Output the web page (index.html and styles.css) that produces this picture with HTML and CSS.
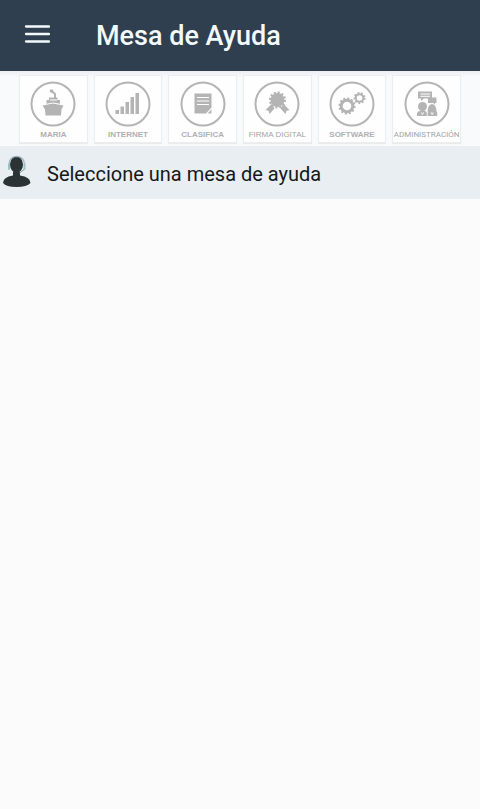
FILE: index.html
```html
<!DOCTYPE html>
<html lang="es">
<head>
<meta charset="utf-8">
<meta name="viewport" content="width=device-width, initial-scale=1">
<title>Mesa de Ayuda</title>
<link rel="stylesheet" href="styles.css">
</head>
<body>
<header class="topbar">
  <button class="menu" type="button" aria-label="Menú">
    <svg width="26" height="20" viewBox="0 0 26 20"><path d="M2 2.500H25M2 10H25M2 17.500H25" stroke="#f3fafb" stroke-width="2.300" stroke-linecap="round"/></svg>
  </button>
  <h1 class="title">Mesa de Ayuda</h1>
</header>
<main>
  <nav class="desks">
    <button class="desk" type="button">
      <svg class="icon" viewBox="0 0 46 46"><circle class="ring" cx="23" cy="23" r="21.5"/><path d="M12.500 24.500L23 22.500L33.500 24.500L31.500 28.500L31 34.500H15.500L15 28.500Z"/><path d="M16.500 22.800V19H19V16.500H27.500V19H30V22.800L23 21.500Z"/><path class="line" d="M25 17V13L21.500 10" stroke-width="2"/><circle cx="21.500" cy="10" r="1.800"/><path class="cut" d="M20 19H27" stroke-width=".8"/></svg>
      <span class="label">MARIA</span>
    </button>
    <button class="desk" type="button">
      <svg class="icon" viewBox="0 0 46 46"><circle class="ring" cx="23" cy="23" r="21.5"/><path d="M10.500 29h3.500v4h-3.500zM15.500 25.500h3.500v7.500h-3.500zM20.500 21h3.500v12h-3.500zM25.500 16h3.500v17h-3.500zM30.500 12h3.500v21h-3.500z"/></svg>
      <span class="label">INTERNET</span>
    </button>
    <button class="desk" type="button">
      <svg class="icon" viewBox="0 0 46 46"><circle class="ring" cx="23" cy="23" r="21.5"/><path d="M14.500 12.500H31.500V26.500L26 32.500H14.500Z"/><path class="cut" d="M17 16.500H29M17 20H29M17 23.500H29"/><path d="M27.500 32.500L31.500 28.300V32.500Z"/></svg>
      <span class="label">CLASIFICA</span>
    </button>
    <button class="desk" type="button">
      <svg class="icon" viewBox="0 0 46 46"><circle class="ring" cx="23" cy="23" r="21.5"/><path d="M17.500 23L11.500 29L14.500 29.700L15.500 33L20.500 27.500ZM29.500 23L35.500 29L32.500 29.700L31.500 33L26.500 27.500Z"/><circle cx="23.500" cy="19" r="7"/><circle class="teeth" cx="23.500" cy="19" r="7.300"/></svg>
      <span class="label label-light">FIRMA DIGITAL</span>
    </button>
    <button class="desk" type="button">
      <svg class="icon" viewBox="0 0 46 46"><circle class="ring" cx="23" cy="23" r="21.5"/><circle class="gear" cx="18" cy="25" r="5.800" stroke-width="3"/><circle class="teeth" cx="18" cy="25" r="7.300"/><circle class="gear" cx="30.500" cy="17" r="3.800" stroke-width="2"/><circle class="teeth teeth-small" cx="30.500" cy="17" r="5"/></svg>
      <span class="label">SOFTWARE</span>
    </button>
    <button class="desk" type="button">
      <svg class="icon" viewBox="0 0 46 46"><circle class="ring" cx="23" cy="23" r="21.5"/><path d="M14 10.500H28V17.500H20L17 20V17.500H14Z"/><path d="M24 16.500H32.500V22H31V23.500L29 22H24Z"/><path class="cut" d="M16.500 13H26M16.500 15.300H26" stroke-width=".7"/><circle cx="18.500" cy="25.500" r="4.500"/><path d="M13 35V32Q14 30 18.500 29Q22.500 30 22.800 32V35Z"/><path d="M23.700 31Q23.700 23.500 28 23Q32.500 23.500 32.500 31Z"/><path d="M23.600 35V32Q24 30 28 29Q33 30 33.300 32V35Z"/><path class="cut" d="M17.500 31.500L18.500 33.500L19.500 31.500M27.200 31.500L28.200 33.500L29.200 31.500" stroke-width=".7"/></svg>
      <span class="label label-light label-long">ADMINISTRACIÓN</span>
    </button>
  </nav>
  <section class="prompt">
    <svg class="agent" width="34" height="34" viewBox="0 0 34 34"><path d="M3 28Q3 22 13 20.500V16.500H20V20.500Q30.500 22 30.500 28Q27 32 16.500 32Q6 32 3 28Z" fill="#2c3335"/><ellipse cx="16.500" cy="9.500" rx="6.500" ry="8" fill="#2c3335"/><path d="M9 10Q9 1.500 16.500 1.300Q24.500 1.500 24.500 10" fill="none" stroke="#9bb5bb" stroke-width="1.200"/><path d="M9 9V14M24.500 9V14" stroke="#9fc0c7" stroke-width="2" stroke-linecap="round"/><path d="M24 14.500L19.500 18" stroke="#7d979d" stroke-width="1"/></svg>
    <p class="message">Seleccione una mesa de ayuda</p>
  </section>
</main>
</body>
</html>
```
FILE: styles.css
```css
* {
  box-sizing: border-box;
}

body {
  margin: 0;
  min-height: 100vh;
  background: #fbfbfb;
  font-family: Roboto, "Liberation Sans", sans-serif;
}

button {
  margin: 0;
  padding: 0;
  border: 0;
  background: none;
}

svg {
  display: block;
}

.topbar {
  display: flex;
  align-items: center;
  gap: 46px;
  height: 71px;
  padding: 0 24px;
  background: #2f3f50;
}

.menu {
  padding-bottom: 4px;
}

.title {
  margin: 0;
  color: #f3fafb;
  font-size: 27px;
  font-weight: 500;
  line-height: 32px;
}

.desks {
  display: grid;
  grid-template-columns: repeat(6, minmax(0, 1fr));
  gap: 6px;
  padding: 4px 19px 3px;
  background: linear-gradient(#eceef2, #f9fafb 6px);
}

.desk {
  display: flex;
  flex-direction: column;
  align-items: center;
  gap: 3px;
  padding: 5px 0 2px;
  border: 1px solid #ededef;
  background: #fefefe;
  box-shadow: 0 1px 1px #e9eaeb;
}

.icon {
  width: 46px;
  height: 46px;
  fill: #b4b4b4;
}

.ring {
  fill: none;
  stroke: #b4b4b4;
  stroke-width: 2;
}

.line,
.gear {
  fill: none;
  stroke: #b4b4b4;
}

.teeth {
  fill: none;
  stroke: #b4b4b4;
  stroke-width: 2.5;
  stroke-dasharray: 2 1.82;
}

.teeth-small {
  stroke-width: 2;
  stroke-dasharray: 1.8 1.69;
}

.cut {
  fill: none;
  stroke: #fefefe;
  stroke-width: 1;
}

.label {
  color: #b0b0b0;
  font-family: "Liberation Sans", sans-serif;
  font-size: 8px;
  font-weight: 700;
  line-height: 10px;
  white-space: nowrap;
}

.label-light {
  color: #a4a4a4;
  font-weight: 400;
}

.label-long {
  font-family: Roboto, sans-serif;
}

.prompt {
  display: flex;
  align-items: center;
  gap: 13px;
  height: 53px;
  padding-top: 2px;
  background: #e8eef1;
}

.agent {
  flex: none;
  margin-bottom: 3px;
}

.message {
  margin: 0;
  color: #15191b;
  font-size: 20px;
  line-height: 24px;
}
```
